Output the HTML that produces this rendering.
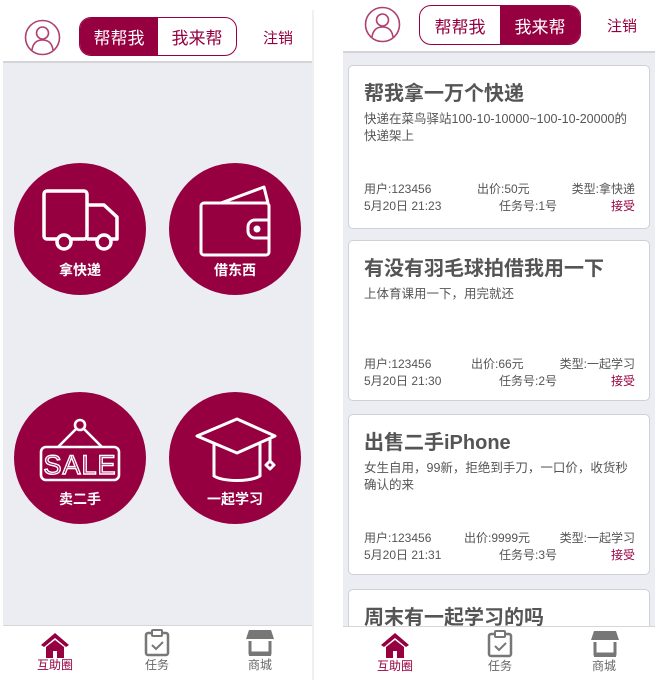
<!DOCTYPE html>
<html><head><meta charset="utf-8"><style>
*{margin:0;padding:0;box-sizing:border-box}
body{width:658px;height:680px;background:#fff;position:relative;overflow:hidden;font-family:"Liberation Sans","Noto Sans CJK SC",sans-serif}
.abs{position:absolute}
.gray{background:#ecedf2}
.seg{position:absolute;border:1.5px solid #960040;border-radius:12px;display:flex;overflow:hidden}
.seg div{flex:1;display:flex;align-items:center;justify-content:center;font-size:17px;color:#960040}
.seg .on{background:#960040;color:#fff}
.logout{position:absolute;font-size:15px;color:#960040}
.circ{position:absolute;width:132px;height:132px;border-radius:50%;background:#960040}
.circ span{position:absolute;left:0;right:0;top:97px;text-align:center;color:#fff;font-size:14px;font-weight:bold}
.circ svg{position:absolute;left:0;top:0}
.foot{position:absolute;background:#fff;border-top:1px solid #d6d6da;height:54px}
.fi{position:absolute;top:4px;width:60px;text-align:center;font-size:12px;color:#666}
.fi.on{color:#960040}
.card{position:absolute;left:348px;width:302px;background:#fff;border:1px solid #cfd0d6;border-radius:5px;padding:0 14px 0 15px}
.card h3{font-size:20px;color:#555;font-weight:bold;margin-top:15px;line-height:26px}
.card p{font-size:12.5px;color:#555;line-height:17px;margin-top:4px}
.row{position:absolute;left:15px;right:14px;font-size:12px;color:#555;height:16px}
.row span{position:absolute;top:0}
</style></head><body>
<!-- LEFT PANEL -->
<div class="abs gray" style="left:3px;top:62px;width:309px;height:563px"></div>
<div class="abs" style="left:3px;top:61px;width:309px;height:2px;background:#d4d4d8"></div>
<div class="abs" style="left:312px;top:10px;width:2px;height:670px;background:#f0f0f2"></div>
<svg class="abs" style="left:24px;top:19px" width="37" height="37" viewBox="0 0 37 37"><circle cx="18.5" cy="18.5" r="17" fill="none" stroke="#b0406f" stroke-width="1.6"/><circle cx="18.5" cy="14" r="6" fill="none" stroke="#b0406f" stroke-width="1.6"/><path d="M8 31c1-7 5-10 10.5-10s9.5 3 10.5 10" fill="none" stroke="#b0406f" stroke-width="1.6"/></svg>
<div class="seg" style="left:79px;top:17px;width:158px;height:39px"><div class="on">帮帮我</div><div>我来帮</div></div>
<div class="logout" style="left:263px;top:27px">注销</div>

<div class="circ" style="left:14px;top:163px"><svg width="132" height="132"><g fill="none" stroke="#fff" stroke-width="3.5" stroke-linejoin="round"><rect x="30" y="28" width="43" height="48" rx="3"/><path d="M73 42h17l13 12v22H73"/><circle cx="50" cy="79" r="7" fill="#960040"/><circle cx="90" cy="79" r="7" fill="#960040"/></g></svg><span>拿快递</span></div>
<div class="circ" style="left:169px;top:163px"><svg width="132" height="132"><g fill="none" stroke="#fff" stroke-width="3" stroke-linejoin="round"><path d="M52 40l43-16 4 16"/><rect x="32" y="40" width="68" height="52" rx="3"/><path d="M100 57H86a7 7 0 0 0-7 7v4a7 7 0 0 0 7 7h14"/></g><circle cx="88" cy="66" r="3.5" fill="#fff"/></svg><span>借东西</span></div>
<div class="circ" style="left:14px;top:392px"><svg width="132" height="132"><g fill="none" stroke="#fff" stroke-width="2.6"><circle cx="66" cy="33" r="5"/><path d="M62 37L44 55M70 37l18 18"/><rect x="27" y="55" width="78" height="33" rx="5"/></g><text x="66" y="82" font-family="Liberation Sans,sans-serif" font-size="27" fill="none" stroke="#fff" stroke-width="1.4" text-anchor="middle" letter-spacing="1">SALE</text></svg><span>卖二手</span></div>
<div class="circ" style="left:169px;top:392px"><svg width="132" height="132"><g fill="none" stroke="#fff" stroke-width="3" stroke-linejoin="round"><path d="M28 44l40-17 38 17-38 17z"/><path d="M45 52v32c10 6 36 6 46 0V52"/><path d="M101 47v22l-4 4 4 4 4-4-4-4"/></g></svg><span>一起学习</span></div>

<div class="foot" style="left:3px;top:625px;width:309px"></div>
<svg class="abs" style="left:40px;top:632px" width="30" height="26" viewBox="0 0 30 26"><path d="M15 1L1 13l3 2 11-9 11 9 3-2z M6 15v11h7v-7h4v7h7V15L15 8z" fill="#960040"/></svg>
<div class="fi on" style="left:25px;top:656px">互助圈</div>
<svg class="abs" style="left:144px;top:629px" width="26" height="28" viewBox="0 0 26 28"><rect x="2" y="4" width="22" height="22" rx="2" fill="none" stroke="#777" stroke-width="2.5"/><rect x="8" y="1" width="10" height="6" rx="1" fill="#fff" stroke="#777" stroke-width="2"/><path d="M8 16l4 4 7-7" fill="none" stroke="#777" stroke-width="2"/></svg>
<div class="fi" style="left:127px;top:656px">任务</div>
<svg class="abs" style="left:246px;top:629px" width="28" height="28" viewBox="0 0 28 28"><path d="M3 1h22l3 9H0z" fill="#777"/><path d="M4 12v12h20V12" fill="none" stroke="#777" stroke-width="3"/><rect x="3" y="25" width="22" height="2" fill="#777"/></svg>
<div class="fi" style="left:230px;top:656px">商城</div>

<!-- RIGHT PANEL -->
<div class="abs gray" style="left:343px;top:52px;width:312px;height:574px"></div>
<div class="abs" style="left:343px;top:51px;width:312px;height:2px;background:#d4d4d8"></div>
<svg class="abs" style="left:364px;top:6px" width="37" height="37" viewBox="0 0 37 37"><circle cx="18.5" cy="18.5" r="17" fill="none" stroke="#b0406f" stroke-width="1.6"/><circle cx="18.5" cy="14" r="6" fill="none" stroke="#b0406f" stroke-width="1.6"/><path d="M8 31c1-7 5-10 10.5-10s9.5 3 10.5 10" fill="none" stroke="#b0406f" stroke-width="1.6"/></svg>
<div class="seg" style="left:419px;top:5px;width:162px;height:40px"><div>帮帮我</div><div class="on">我来帮</div></div>
<div class="logout" style="left:607px;top:15px">注销</div>

<div class="card" style="top:65px;height:164px"><h3>帮我拿一万个快递</h3><p>快递在菜鸟驿站100-10-10000~100-10-20000的快递架上</p>
<div class="row" style="top:114px"><span style="left:0">用户:123456</span><span style="left:113px">出价:50元</span><span style="right:0">类型:拿快递</span></div>
<div class="row" style="top:131px"><span style="left:0">5月20日 21:23</span><span style="left:135px">任务号:1号</span><span style="right:0;color:#960040">接受</span></div></div>

<div class="card" style="top:240px;height:161px"><h3>有没有羽毛球拍借我用一下</h3><p>上体育课用一下，用完就还</p>
<div class="row" style="top:114px"><span style="left:0">用户:123456</span><span style="left:107px">出价:66元</span><span style="right:0">类型:一起学习</span></div>
<div class="row" style="top:131px"><span style="left:0">5月20日 21:30</span><span style="left:135px">任务号:2号</span><span style="right:0;color:#960040">接受</span></div></div>

<div class="card" style="top:414px;height:161px"><h3>出售二手iPhone</h3><p>女生自用，99新，拒绝到手刀，一口价，收货秒确认的来</p>
<div class="row" style="top:114px"><span style="left:0">用户:123456</span><span style="left:100px">出价:9999元</span><span style="right:0">类型:一起学习</span></div>
<div class="row" style="top:131px"><span style="left:0">5月20日 21:31</span><span style="left:135px">任务号:3号</span><span style="right:0;color:#960040">接受</span></div></div>

<div class="card" style="top:589px;height:60px"><h3>周末有一起学习的吗</h3></div>

<div class="foot" style="left:343px;top:626px;width:312px"></div>
<svg class="abs" style="left:380px;top:632px" width="30" height="26" viewBox="0 0 30 26"><path d="M15 1L1 13l3 2 11-9 11 9 3-2z M6 15v11h7v-7h4v7h7V15L15 8z" fill="#960040"/></svg>
<div class="fi on" style="left:365px;top:657px">互助圈</div>
<svg class="abs" style="left:487px;top:630px" width="26" height="28" viewBox="0 0 26 28"><rect x="2" y="4" width="22" height="22" rx="2" fill="none" stroke="#777" stroke-width="2.5"/><rect x="8" y="1" width="10" height="6" rx="1" fill="#fff" stroke="#777" stroke-width="2"/><path d="M8 16l4 4 7-7" fill="none" stroke="#777" stroke-width="2"/></svg>
<div class="fi" style="left:470px;top:657px">任务</div>
<svg class="abs" style="left:591px;top:630px" width="28" height="28" viewBox="0 0 28 28"><path d="M3 1h22l3 9H0z" fill="#777"/><path d="M4 12v12h20V12" fill="none" stroke="#777" stroke-width="3"/><rect x="3" y="25" width="22" height="2" fill="#777"/></svg>
<div class="fi" style="left:574px;top:657px">商城</div>
</body></html>
